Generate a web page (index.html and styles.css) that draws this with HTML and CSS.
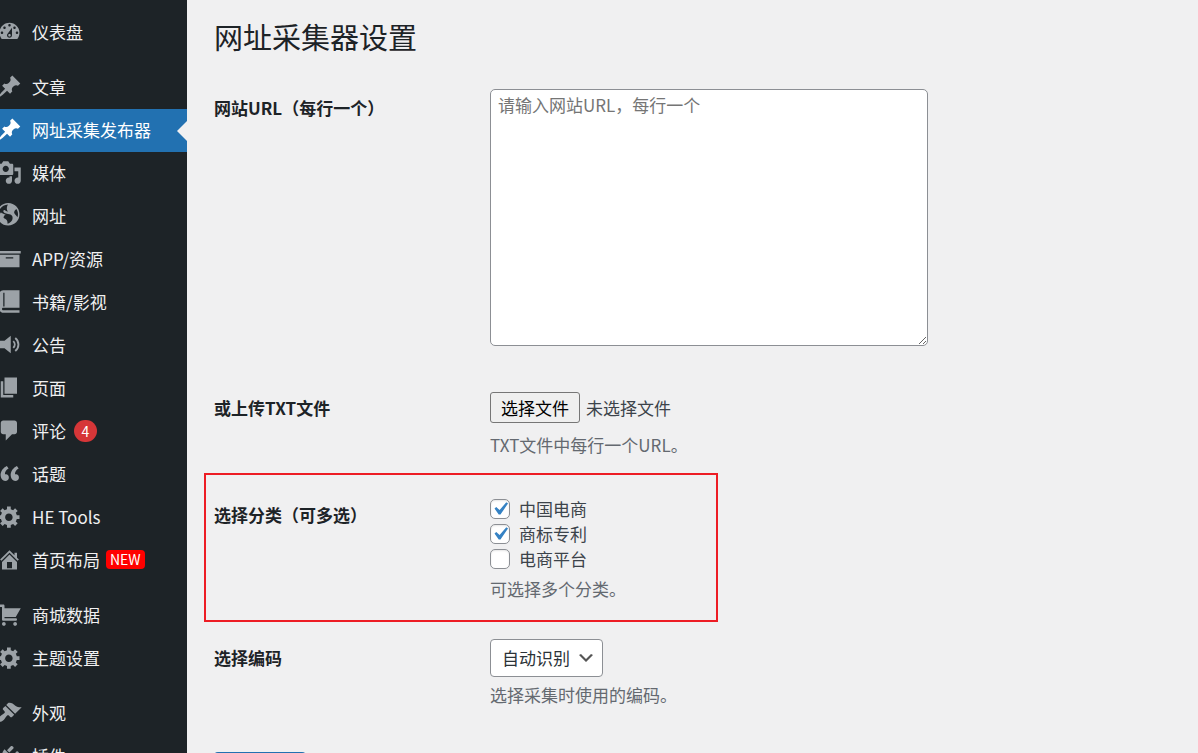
FILE: index.html
```html
<!DOCTYPE html>
<html lang="zh-CN">
<head>
  <meta charset="UTF-8">
  <meta name="viewport" content="width=device-width, initial-scale=1.0">
  <title>网址采集器设置</title>
  <link rel="stylesheet" href="styles.css">
</head>
<body>
  <nav class="sidebar">
    <ul class="menu">
      <li><a href="#"><svg viewBox="0 0 20 20"><path fill-rule="evenodd" d="M3.76 16h12.48c1-1.26 1.76-3.04 1.76-5 0-4.42-3.58-8-8-8s-8 3.58-8 8c0 1.96.76 3.74 1.76 5zM10 4c.55 0 1 .45 1 1s-.45 1-1 1-1-.45-1-1 .45-1 1-1zM6 6c.55 0 1 .45 1 1s-.45 1-1 1-1-.45-1-1 .45-1 1-1zm8 0c.55 0 1 .45 1 1s-.45 1-1 1-1-.45-1-1 .45-1 1-1zm-5.37 5.55L12 7v6c0 1.1-.9 2-2 2s-2-.9-2-2c0-.57.24-1.08.63-1.45zM4 10c.55 0 1 .45 1 1s-.45 1-1 1-1-.45-1-1 .45-1 1-1zm12 0c.55 0 1 .45 1 1s-.45 1-1 1-1-.45-1-1 .45-1 1-1zm-5 3c0-.55-.45-1-1-1s-1 .45-1 1 .45 1 1 1 1-.45 1-1z"/></svg>仪表盘</a></li>
      <li class="separator"></li>
      <li><a href="#"><svg viewBox="0 0 20 20"><path d="M10.44 3.02l1.82-1.82 6.36 6.35-1.83 1.82c-1.05-.68-2.48-.57-3.41.36l-.75.75c-.92.93-1.04 2.35-.35 3.41l-1.83 1.82-2.41-2.41-2.8 2.79c-.42.42-3.38 2.71-3.8 2.29s1.86-3.39 2.28-3.81l2.79-2.79L4.1 9.36l1.83-1.82c1.05.69 2.48.57 3.4-.36l.75-.75c.93-.92 1.05-2.35.36-3.41z"/></svg>文章</a></li>
      <li class="current"><a href="#"><svg viewBox="0 0 20 20"><path d="M10.44 3.02l1.82-1.82 6.36 6.35-1.83 1.82c-1.05-.68-2.48-.57-3.41.36l-.75.75c-.92.93-1.04 2.35-.35 3.41l-1.83 1.82-2.41-2.41-2.8 2.79c-.42.42-3.38 2.71-3.8 2.29s1.86-3.39 2.28-3.81l2.79-2.79L4.1 9.36l1.83-1.82c1.05.69 2.48.57 3.4-.36l.75-.75c.93-.92 1.05-2.35.36-3.41z"/></svg>网址采集发布器</a></li>
      <li><a href="#"><svg viewBox="0 0 20 20"><path fill-rule="evenodd" d="M13 11V4c0-.55-.45-1-1-1h-1.67L9 1H5L3.67 3H2c-.55 0-1 .45-1 1v7c0 .55.45 1 1 1h10c.55 0 1-.45 1-1zM7 4.5c1.38 0 2.5 1.12 2.5 2.5S8.38 9.5 7 9.5 4.5 8.38 4.5 7 5.62 4.5 7 4.5zM14 6h5v10.5c0 1.38-1.12 2.5-2.5 2.5S14 17.88 14 16.5s1.12-2.5 2.5-2.5c.17 0 .34.02.5.05V9h-3V6zm-4 8.05V13h2v3.5c0 1.38-1.12 2.5-2.5 2.5S7 17.88 7 16.5 8.12 14 9.5 14c.17 0 .34.02.5.05z"/></svg>媒体</a></li>
      <li><a href="#"><svg viewBox="0 0 20 20"><path fill-rule="evenodd" d="M9 0C4.03 0 0 4.03 0 9s4.03 9 9 9 9-4.03 9-9-4.03-9-9-9zm3.46 11.95c0 1.47-.8 3.3-4.06 4.7.3-4.17-2.52-3.69-3.2-5 .13-1.1.8-2.06 1.8-2.55-1.55-.27-3-.96-4.18-2 .05.47.28.9.64 1.21-.78-.3-1.46-.82-1.94-1.5.98-3.22 3.88-5.48 7.25-5.63-.84 1.38-1.5 4.13 0 5.57C7.23 7 6.26 5 5.41 5.79c-1.13 1.06.33 2.51 3.42 3.08 3.29.59 3.66 1.58 3.63 3.08zm1.34-4c-.32-1.11.62-2.23 1.69-3.14 1.36 1.95 1.67 4.45.84 6.68-.77-1.89-2.17-2.32-2.53-3.57z"/></svg>网址</a></li>
      <li><a href="#"><svg viewBox="0 0 20 20"><path fill-rule="evenodd" d="M19 4v2H1V4h18zM2 7h16v10H2V7zm11 3V9H7v1h6z"/></svg>APP/资源</a></li>
      <li><a href="#"><svg viewBox="0 0 20 20"><path fill-rule="evenodd" d="M18 15V1H5C3.3 1 2 2.3 2 4v12c0 1.7 1.3 3 3 3h13v-2H5c-.6 0-1-.4-1-1s.4-1 1-1h13zM6 3v11H5V3z"/></svg>书籍/影视</a></li>
      <li><a href="#"><svg viewBox="0 0 20 20"><path d="M2 7h4l5-4v14l-5-4H2z"/><path class="line" d="M13 7.3c1.6 1.6 1.6 3.8 0 5.4M14.6 4.8c3.4 2.8 3.4 7.6 0 10.4"/></svg>公告</a></li>
      <li><a href="#"><svg viewBox="0 0 20 20"><path d="M6 15V2h10v13H6zm-1 1h8v2H3V5h2v11z"/></svg>页面</a></li>
      <li><a href="#"><svg viewBox="0 0 20 20"><path d="M5 2h9c1.1 0 2 .9 2 2v7c0 1.1-.9 2-2 2h-2l-5 5v-5H5c-1.1 0-2-.9-2-2V4c0-1.1.9-2 2-2z"/></svg>评论<span class="count">4</span></a></li>
      <li><a href="#"><svg viewBox="0 0 20 20"><path d="M9.49 13.22c0-.74-.2-1.38-.61-1.9-.62-.78-1.83-.88-2.53-.72-.29-1.65 1.11-3.75 2.92-4.65L7.88 4c-2.73 1.3-5.42 4.28-4.96 8.05C3.21 14.43 4.59 16 6.54 16c.85 0 1.56-.25 2.12-.75s.83-1.18.83-2.03zm8.05 0c0-.74-.2-1.38-.61-1.9-.63-.78-1.83-.88-2.53-.72-.29-1.65 1.11-3.75 2.92-4.65L15.93 4c-2.73 1.3-5.41 4.28-4.95 8.05.29 2.38 1.66 3.95 3.61 3.95.85 0 1.56-.25 2.12-.75s.83-1.18.83-2.03z"/></svg>话题</a></li>
      <li><a href="#"><svg viewBox="0 0 20 20"><path fill-rule="evenodd" d="M18 12h-2.18c-.17.7-.44 1.35-.81 1.93l1.54 1.54-2.1 2.1-1.54-1.54c-.58.36-1.23.63-1.91.79V19H8v-2.18c-.68-.16-1.33-.43-1.91-.79l-1.54 1.54-2.12-2.12 1.54-1.54c-.36-.58-.63-1.23-.79-1.91H1V9.03h2.17c.16-.7.44-1.35.8-1.94L2.43 5.55l2.1-2.1 1.54 1.54c.58-.37 1.24-.64 1.93-.81V2h3v2.18c.68.16 1.33.43 1.91.79l1.54-1.54 2.12 2.12-1.54 1.54c.36.59.64 1.24.8 1.94H18V12zm-8.5 1.5c1.66 0 3-1.34 3-3s-1.34-3-3-3-3 1.34-3 3 1.34 3 3 3z"/></svg>HE Tools</a></li>
      <li><a href="#"><svg viewBox="0 0 20 20"><path fill-rule="evenodd" d="M16 8.5l1.53 1.53-1.06 1.06L10 4.6l-6.47 6.49-1.06-1.06L10 2.5l4 4v-2h2v4zm-6-2.46l6 5.99V18H4v-5.97zM12 17v-5H8v5h4z"/></svg>首页布局<span class="new">NEW</span></a></li>
      <li class="separator"></li>
      <li><a href="#"><svg viewBox="0 0 20 20"><path d="M6 13h9c.55 0 1 .45 1 1s-.45 1-1 1H5c-.55 0-1-.45-1-1V4H2c-.55 0-1-.45-1-1s.45-1 1-1h3c.55 0 1 .45 1 1v2h13l-4 7H6v1zm-.5 3c.83 0 1.5.67 1.5 1.5S6.33 19 5.5 19 4 18.33 4 17.5 4.67 16 5.5 16zm9 0c.83 0 1.5.67 1.5 1.5s-.67 1.5-1.5 1.5-1.5-.67-1.5-1.5.67-1.5 1.5-1.5z"/></svg>商城数据</a></li>
      <li><a href="#"><svg viewBox="0 0 20 20"><path fill-rule="evenodd" d="M18 12h-2.18c-.17.7-.44 1.35-.81 1.93l1.54 1.54-2.1 2.1-1.54-1.54c-.58.36-1.23.63-1.91.79V19H8v-2.18c-.68-.16-1.33-.43-1.91-.79l-1.54 1.54-2.12-2.12 1.54-1.54c-.36-.58-.63-1.23-.79-1.91H1V9.03h2.17c.16-.7.44-1.35.8-1.94L2.43 5.55l2.1-2.1 1.54 1.54c.58-.37 1.24-.64 1.93-.81V2h3v2.18c.68.16 1.33.43 1.91.79l1.54-1.54 2.12 2.12-1.54 1.54c.36.59.64 1.24.8 1.94H18V12zm-8.5 1.5c1.66 0 3-1.34 3-3s-1.34-3-3-3-3 1.34-3 3 1.34 3 3 3z"/></svg>主题设置</a></li>
      <li class="separator"></li>
      <li><a href="#"><svg viewBox="0 0 20 20"><path d="M14.48 11.06L7.41 3.99l1.5-1.5c.5-.56 2.3-.47 3.51.32 1.21.8 1.43 1.28 2.91 2.1 1.18.64 2.45 1.26 4.45.85zm-.71.71L6.7 4.7 4.93 6.47c-.39.39-.39 1.02 0 1.41l1.06 1.06c.39.39.39 1.03 0 1.42-.6.6-1.43 1.11-2.21 1.69-.35.26-.7.53-1.01.84C1.43 14.23.4 16.08 1.4 17.07c.99 1 2.84-.03 4.18-1.36.31-.31.58-.66.85-1.02.57-.78 1.08-1.61 1.69-2.21.39-.39 1.02-.39 1.41 0l1.06 1.06c.39.39 1.02.39 1.41 0z"/></svg>外观</a></li>
      <li><a href="#"><svg viewBox="0 0 20 20"><path d="M13.11 4.36L9.87 7.6 8 5.73l3.24-3.24c.35-.34 1.05-.2 1.56.32.52.51.66 1.21.31 1.55zm-8 1.77l.91-1.12 9.01 9.01-1.19.84c-.71.71-2.63 1.16-3.82 1.16H6.14L4.9 17.26c-.59.59-1.54.59-2.12 0-.59-.58-.59-1.53 0-2.12l1.24-1.24v-3.88c0-1.13.4-3.19 1.09-3.89zm7.26 3.97l3.24-3.24c.34-.35 1.04-.21 1.55.31.52.51.66 1.21.31 1.55l-3.24 3.25z"/></svg>插件</a></li>
    </ul>
  </nav>

  <main class="content">
    <h1>网址采集器设置</h1>
    <form>
      <div class="row row-urls">
        <label class="row-label" for="urls">网站URL（每行一个）</label>
        <div class="field">
          <textarea id="urls" placeholder="请输入网站URL，每行一个"></textarea>
        </div>
      </div>

      <div class="row row-file">
        <label class="row-label" for="txtFile">或上传TXT文件</label>
        <div class="field">
          <div class="file">
            <input type="file" id="txtFile" accept=".txt">
            <span class="file-button">选择文件</span>
            <span>未选择文件</span>
          </div>
          <p class="description">TXT文件中每行一个URL。</p>
        </div>
      </div>

      <div class="row row-category" role="group" aria-labelledby="categoryLabel">
        <span class="row-label" id="categoryLabel">选择分类（可多选）</span>
        <div class="field">
          <label class="check"><input type="checkbox" checked>中国电商</label>
          <label class="check"><input type="checkbox" checked>商标专利</label>
          <label class="check"><input type="checkbox">电商平台</label>
          <p class="description">可选择多个分类。</p>
        </div>
      </div>

      <div class="row row-encoding">
        <label class="row-label" for="encoding">选择编码</label>
        <div class="field">
          <div class="select">
            <select id="encoding">
              <option>自动识别</option>
              <option>UTF-8</option>
              <option>GBK</option>
            </select>
            <svg viewBox="0 0 20 20"><path d="M5 6l5 5 5-5 2 1-7 7-7-7 2-1z"/></svg>
          </div>
          <p class="description">选择采集时使用的编码。</p>
        </div>
      </div>

      <button type="submit" class="submit">开始采集</button>
    </form>
  </main>
</body>
</html>
```
FILE: styles.css
```css
* {
  box-sizing: border-box;
}

body {
  display: flex;
  min-height: 100vh;
  margin: 0;
  background: #f0f0f1;
  color: #3c434a;
  font-family: "Noto Sans CJK SC", sans-serif;
  font-size: 17px;
  line-height: 24px;
}

/* Sidebar */
.sidebar {
  flex: none;
  width: 187px;
  overflow: hidden;
  background: #1d2327;
}

.menu {
  margin: 0;
  padding: 11px 0 0;
  list-style: none;
}

.menu a {
  display: flex;
  align-items: center;
  height: 43px;
  padding-bottom: 2px;
  color: #f0f0f1;
  text-decoration: none;
}

.menu svg {
  flex: none;
  width: 25px;
  height: 25px;
  margin-left: -3px;
  margin-right: 10px;
  fill: #9ca2a7;
}

.menu .line {
  fill: none;
  stroke: #9ca2a7;
  stroke-width: 1.5;
}

.menu .separator {
  height: 12px;
}

.menu .current {
  position: relative;
  background: #2271b1;
}

.menu .current a {
  color: #fff;
}

.menu .current svg {
  fill: #fff;
}

.menu .current::after {
  content: "";
  position: absolute;
  top: 12px;
  right: 0;
  border: 10px solid transparent;
  border-left-width: 0;
  border-right-color: #f0f0f1;
}

.count {
  width: 23px;
  margin-left: 8px;
  border-radius: 12px;
  background: #d63638;
  color: #fff;
  font-size: 14px;
  line-height: 22px;
  text-align: center;
}

.new {
  margin-left: 6px;
  padding: 0 4px;
  border-radius: 4px;
  background: #f00;
  color: #fff;
  font-size: 14px;
  line-height: 19px;
}

/* Settings form */
.content {
  flex: 1;
  padding: 18px 27px;
}

h1 {
  margin: 0 0 35px;
  color: #1d2327;
  font-size: 29px;
  font-weight: 400;
  line-height: 36px;
}

.row {
  display: grid;
  grid-template-columns: 276px 1fr;
}

.row-label {
  padding-top: 7px;
  color: #1d2327;
  font-weight: 600;
}

.row-urls {
  margin-bottom: 46px;
}

.row-file {
  margin-bottom: 16px;
}

.row-file .row-label {
  padding-top: 4px;
}

/* Red frame round the category choice */
.row-category {
  max-width: 514px;
  margin: 0 0 17px -10px;
  padding: 21px 8px 19px;
  border: 2px solid #ed1c24;
}

.description {
  margin: 6px 0 0;
  color: #646970;
}

textarea {
  display: block;
  width: 438px;
  max-width: 100%;
  height: 257px;
  padding: 3px 7px;
  border: 1px solid #8c8f94;
  border-radius: 5px;
  background: #fff;
  color: #2c3338;
  font: inherit;
}

textarea::placeholder {
  color: #757575;
}

.file {
  position: relative;
  display: flex;
  align-items: center;
  gap: 6px;
  width: 190px;
  margin-bottom: 10px;
}

.file input {
  position: absolute;
  inset: 0;
  width: 100%;
  opacity: 0;
}

.file-button {
  padding: 3px 10px;
  border: 1px solid #767676;
  border-radius: 3px;
  background: #efefef;
  color: #000;
  line-height: 23px;
}

.check {
  display: flex;
  align-items: center;
  gap: 9px;
  height: 25px;
}

.check input {
  appearance: none;
  width: 20px;
  height: 20px;
  margin: 0;
  border: 1px solid #8c8f94;
  border-radius: 5px;
  background: #fff center / 26px no-repeat;
  box-shadow: inset 0 1px 2px rgba(0, 0, 0, 0.1);
}

.check input:checked {
  background-image: url("data:image/svg+xml,%3Csvg xmlns='http://www.w3.org/2000/svg' viewBox='0 0 20 20'%3E%3Cpath d='M14.83 4.89l1.34.94-5.81 8.38H9.02L5.78 9.67l1.34-1.25 2.57 2.4z' fill='%233582c4'/%3E%3C/svg%3E");
}

.select {
  position: relative;
  width: 113px;
}

.select select {
  display: block;
  appearance: none;
  width: 100%;
  height: 38px;
  padding: 0 30px 0 11px;
  border: 1px solid #8c8f94;
  border-radius: 4px;
  background: #fff;
  color: #2c3338;
  font: inherit;
}

.select svg {
  position: absolute;
  top: 9px;
  right: 7px;
  width: 20px;
  height: 20px;
  fill: #555;
  pointer-events: none;
}

.submit {
  display: block;
  height: 38px;
  margin-top: 45px;
  padding: 0 12px;
  border: 0;
  border-radius: 4px;
  background: #2271b1;
  color: #fff;
  font: inherit;
}
```
